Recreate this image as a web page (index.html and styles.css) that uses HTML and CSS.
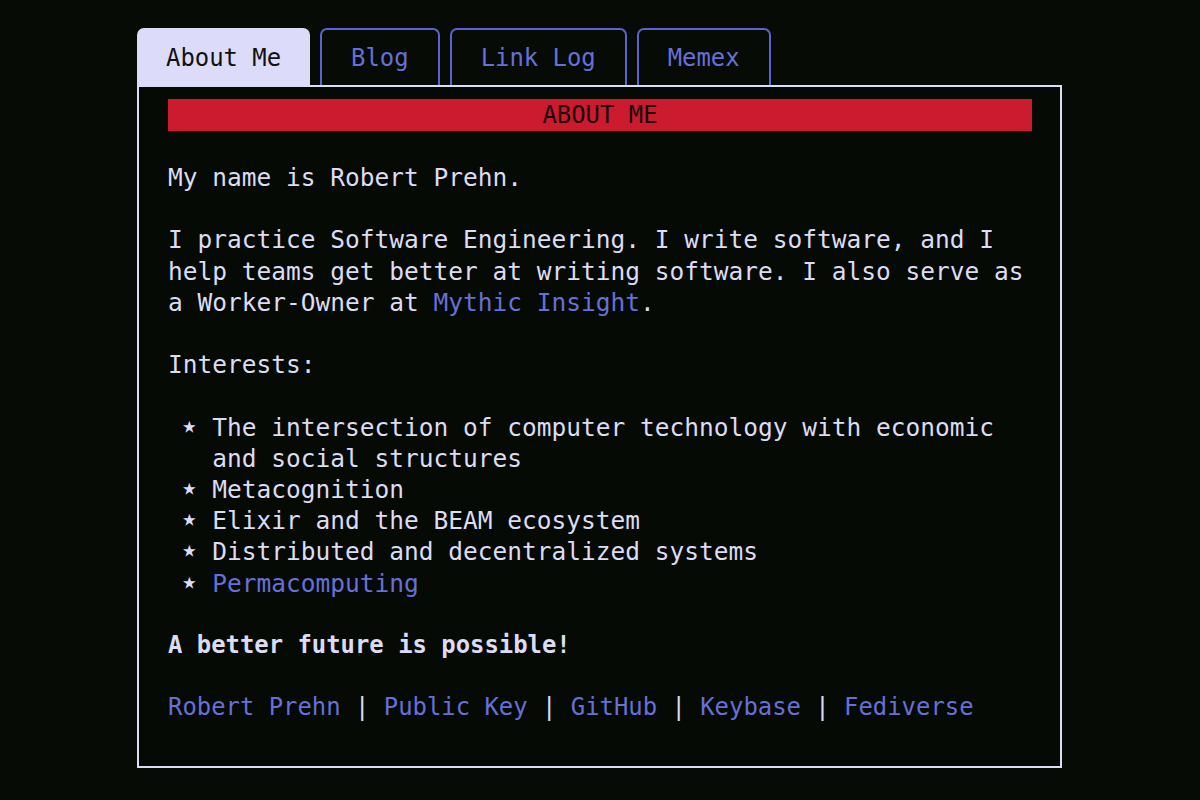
FILE: index.html
```html
<!DOCTYPE html>
<html lang="en">
<head>
  <meta charset="UTF-8" />
  <meta name="viewport" content="width=device-width, initial-scale=1.0" />
  <title>Robert Prehn</title>
  <link rel="stylesheet" href="styles.css">
</head>
<body>
  <div class="page">
    <!-- Abas -->
    <nav class="tabs">
      <a class="tab active" href="#">About Me</a>
      <a class="tab" href="#">Blog</a>
      <a class="tab" href="#">Link Log</a>
      <a class="tab" href="#">Memex</a>
    </nav>

    <main class="box">
      <h1 class="heading">ABOUT ME</h1>

      <p class="first">My name is Robert Prehn.</p>

      <p>I practice Software Engineering. I write software, and I help teams get better at writing software. I also serve as a Worker-Owner at <a href="#">Mythic Insight</a>.</p>

      <p>Interests:</p>

      <ul class="interests">
        <li>The intersection of computer technology with economic and social structures</li>
        <li>Metacognition</li>
        <li>Elixir and the BEAM ecosystem</li>
        <li>Distributed and decentralized systems</li>
        <li><a href="#">Permacomputing</a></li>
      </ul>

      <p class="motto">A better future is possible!</p>

      <p class="links">
        <a href="#">Robert Prehn</a> | <a href="#">Public Key</a> | <a href="#">GitHub</a> | <a href="#">Keybase</a> | <a href="#">Fediverse</a>
      </p>
    </main>
  </div>
</body>
</html>
```

FILE: styles.css
```css
/* Base */
body {
  margin: 0;
  background-color: #070b05;
  color: #dcdcf2;
  font-family: "DejaVu Sans Mono", "Liberation Mono", monospace;
  font-size: 24.5px;
  line-height: 31.2px;
}
a {
  color: #6670d8;
  text-decoration: none;
}
.page {
  width: 925px;
  margin: 28px auto 0;
  padding-right: 1px;
}

/* Abas */
.tabs {
  display: flex;
  gap: 10px;
  font-size: 23.9px;
}
.tab {
  display: block;
  height: 55px;
  line-height: 57px;
  padding: 0 29px;
  border: 2px solid #5a63d0;
  border-bottom: none;
  border-radius: 7px 7px 0 0;
  background-color: #070b05;
}
.tab.active {
  background-color: #dcdcfa;
  border-color: #dcdcfa;
  color: #111;
  padding: 0 27px;
}

/* Caixa principal */
.box {
  border: 2px solid #dcdcf2;
  background-color: #060a04;
  padding: 12px 28px 42px 29px;
}
.heading {
  margin: 0;
  background-color: #cc1a2e;
  color: #1a0808;
  font-size: 23.9px;
  font-weight: normal;
  line-height: 32px;
  text-align: center;
}
.box p {
  margin: 31.2px 0 0;
}
.box .first {
  margin-top: 31px;
}
.interests {
  list-style: none;
  margin: 31.2px 0 0;
  padding: 0 0 0 3ch;
}
.interests li {
  position: relative;
}
.interests li::before {
  content: "\22C6";
  position: absolute;
  left: -34px;
  font-size: 1.5em;
}
.box .motto {
  font-weight: bold;
  font-size: 23.9px;
}
.box .links {
  font-size: 23.9px;
}
```
